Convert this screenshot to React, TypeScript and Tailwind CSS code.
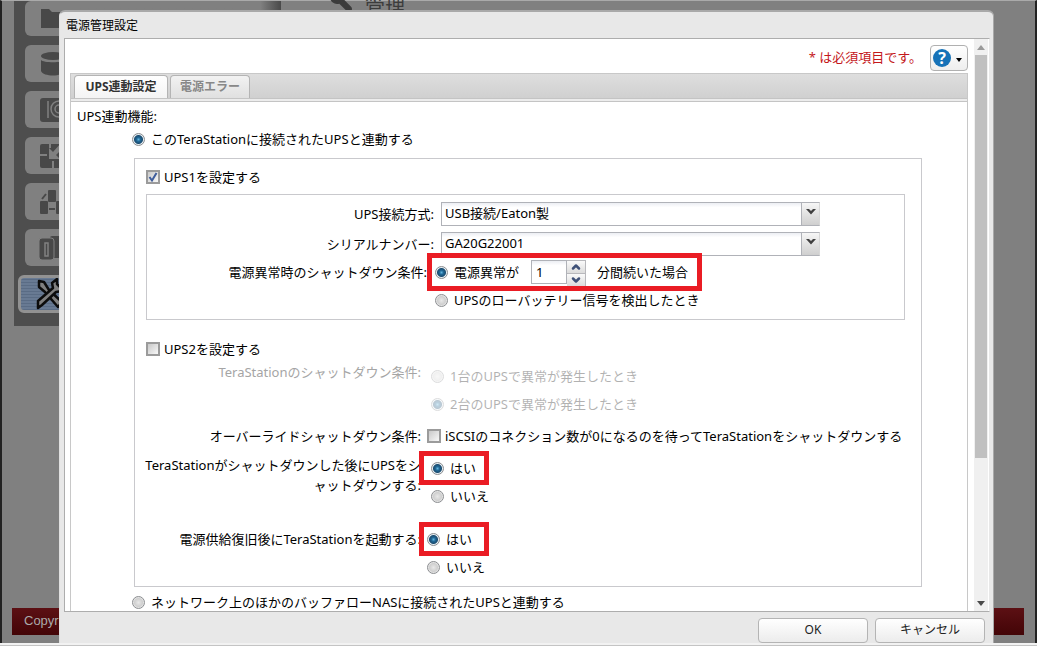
import { type ReactNode } from "react";
import { ChevronDown, ChevronUp, Wrench } from "lucide-react";

const radioClass =
  "m-0 size-[13px] shrink-0 appearance-none rounded-full border border-[#8b8d90] bg-[radial-gradient(circle,#e8e8e8_0,#cfcfcf_4px,#f4f4f4_6px)] checked:bg-[radial-gradient(circle,#62b4dc_0,#1f6796_2px,#1c4d70_4px,#e6eef3_5px,#d4dde3_6px)]";

type OptionProps = { name: string; label: string; checked?: boolean; disabled?: boolean };

function RadioOption({ name, label, checked = false, disabled = false }: OptionProps) {
  return (
    <label className={`flex h-5 w-max items-center gap-[6px] whitespace-nowrap ${disabled ? "opacity-30" : ""}`}>
      <input type="radio" name={name} defaultChecked={checked} disabled={disabled} className={radioClass} />
      {label}
    </label>
  );
}

function CheckOption({ label, checked = false }: { label: string; checked?: boolean }) {
  return (
    <label className="relative flex h-5 w-max items-center gap-1 whitespace-nowrap">
      <input
        type="checkbox"
        defaultChecked={checked}
        className="peer m-0 size-[14px] shrink-0 appearance-none border-2 border-[#9b9b9b] bg-linear-to-br from-[#c9c9c9] to-[#f8f8f8]"
      />
      <svg viewBox="0 0 14 14" className="pointer-events-none absolute left-0 hidden size-[14px] peer-checked:block">
        <path d="M3.5 7 L6 10.5 L10.5 3" fill="none" stroke="#3d5c9c" strokeWidth="2" />
      </svg>
      {label}
    </label>
  );
}

function Highlight({ children, className }: { children: ReactNode; className: string }) {
  return (
    <div className="relative w-max">
      {children}
      <div className={`pointer-events-none absolute border-5 border-[#ea1c24] ${className}`} />
    </div>
  );
}

function SelectField({ id, label, value }: { id: string; label: string; value: string }) {
  return (
    <>
      <label htmlFor={id} className="flex h-6 items-center justify-end pr-[7px]">
        {label}
      </label>
      <div className="relative h-6 w-full max-w-[379px]">
        <select
          id={id}
          className="block size-full appearance-none border border-[#b0b2b8] bg-white bg-linear-to-b from-[#eceef3] to-white to-20% pr-6 pb-[2px] pl-[3px]"
        >
          <option>{value}</option>
        </select>
        <span className="pointer-events-none absolute inset-y-0 right-0 flex w-[19px] items-center justify-center border border-[#b0b2b8] border-r-[#d8d8d8] bg-linear-to-b from-[#f6f6f6] to-[#cfcfcf] pb-1">
          <svg viewBox="0 0 10 6" className="h-[6px] w-[10px]">
            <path d="M0 0h3l2 2 2-2h3L5 5.5z" fill="#404040" />
          </svg>
        </span>
      </div>
    </>
  );
}

const sideIcons: ReactNode[] = [
  <path key="folder" d="M16 8h8l3 3h14v16H16z" />,
  <g key="disk">
    <path d="M16 15c2 3 22 3 24 0v11c-2 6-22 6-24 0z" />
    <ellipse cx="28" cy="11" rx="12" ry="4" />
  </g>,
  <g key="search">
    <rect x="15" y="7" width="24" height="24" rx="3" />
    <path d="M23 10v17" stroke="#808080" strokeWidth="1.5" />
    <circle cx="34" cy="18" r="8" stroke="#808080" strokeWidth="1.5" />
    <circle cx="34" cy="18" r="4" fill="none" stroke="#808080" strokeWidth="1.5" />
  </g>,
  <g key="arrows">
    <rect x="15" y="7" width="26" height="24" rx="2" />
    <path d="M15 18h7M28 24v8M25 4v7" stroke="#808080" strokeWidth="2" />
    <path d="M24 22V11l4 4 8-9 4 3-9 9 4 4z" fill="#808080" />
  </g>,
  <g key="network">
    <rect x="23" y="7" width="8" height="12" rx="1" />
    <rect x="15" y="18" width="8" height="13" rx="1" />
    <rect x="31" y="18" width="8" height="13" rx="1" />
    <path d="M17 16l4-5M24 26h6" stroke="#484848" strokeWidth="2" />
  </g>,
  <g key="drive">
    <rect x="25" y="7" width="14" height="22" rx="2" />
    <rect x="14" y="9" width="15" height="22" rx="3" stroke="#808080" />
    <path d="M20 14h3v13h-3z" fill="none" stroke="#808080" strokeWidth="1.5" />
  </g>,
];

function Backdrop() {
  return (
    <div className="flex min-h-screen flex-col border-x-2 border-t border-[#222] border-t-[#aaa] bg-[#808080] pb-[11px]" aria-hidden="true">
      <div className="flex flex-1 pl-3">
        <div className="h-[325px] w-[267px] bg-[#4e4e4e] pl-[11px]">
          <div className="flex flex-col gap-[9px]">
            {sideIcons.map((icon, index) => (
              <div
                key={index}
                className={`rounded-l-md bg-linear-to-r from-[#808080] from-92% to-[#4a4a4a] ${index === 0 ? "h-[35px]" : "h-[37px]"}`}
              >
                <svg viewBox="0 0 48 37" className="h-[37px] w-12" fill="#484848">
                  {icon}
                </svg>
              </div>
            ))}
          </div>
          <div className="mt-[9px] -ml-[7px] h-[38px] rounded-md border-3 border-[#929292] bg-[repeating-linear-gradient(0deg,#5a6c85_0_1px,#687a93_1px_3px)]">
            <svg viewBox="0 0 48 32" className="h-8 w-12">
              <g stroke="#0c0c0c" strokeWidth="2.5" fill="#808080" strokeLinejoin="round">
                <path d="M18 3l5 1 5 8 13 12-4 5L24 14l-6-5z" />
                <path d="M17 23l15-13-1-5 5-4 0 5 3 3 5-2-3 6-6 1-14 13-4 3z" />
              </g>
            </svg>
          </div>
        </div>
        <div className="flex items-start gap-3 pl-12 text-xl leading-5 text-[#3c3c3c]">
          <Wrench className="-mt-3 size-6 -scale-x-100" fill="#3c3c3c" />
          <span className="-mt-1">管理</span>
        </div>
      </div>
      <div className="mr-[11px] ml-[10px] h-[27px] bg-linear-to-b from-[#5c1014] to-[#430507] pl-3 font-['Liberation_Sans',sans-serif] text-[13px] leading-[25px] text-[#aaa]">
        Copyright
      </div>
    </div>
  );
}

const spinButton =
  "flex flex-1 items-center justify-center border border-l-0 border-[#b8b8bc] bg-linear-to-b from-[#fafafa] to-[#dcdcdc]";

function UpsOneGroup() {
  return (
    <div className="mt-[7px] grid h-[126px] grid-cols-[294px_1fr] content-start border border-[#c9c9cd] pt-[7px]">
      <SelectField id="method" label="UPS接続方式:" value="USB接続/Eaton製" />
      <div className="col-span-2 h-[6px]" />
      <SelectField id="serial" label="シリアルナンバー:" value="GA20G22001" />
      <div className="flex h-8 items-center justify-end pr-[14px] whitespace-nowrap">電源異常時のシャットダウン条件:</div>
      <div className="-ml-[6px] flex h-8 items-center">
        <Highlight className="-top-[7px] -right-[14px] -bottom-[7px] -left-2 bg-transparent">
          <div className="flex h-6 items-center">
            <RadioOption name="condition" label="電源異常が" checked />
            <div className="ml-3 flex h-6 w-[55px]">
              <input
                type="text"
                aria-label="分"
                defaultValue="1"
                className="min-w-0 flex-1 border border-[#b0b2b8] bg-linear-to-b from-[#eceef3] to-white to-20% pl-1"
              />
              <div className="flex w-[19px] flex-col">
                <button type="button" aria-label="増やす" className={spinButton}>
                  <ChevronUp className="size-3 text-[#3f5178]" strokeWidth={5} />
                </button>
                <button type="button" aria-label="減らす" className={`${spinButton} border-t-0`}>
                  <ChevronDown className="size-3 text-[#3f5178]" strokeWidth={5} />
                </button>
              </div>
            </div>
            <span className="ml-[11px]">分間続いた場合</span>
          </div>
        </Highlight>
      </div>
      <div className="col-start-2 -ml-[6px] flex h-6 items-center">
        <RadioOption name="condition" label="UPSのローバッテリー信号を検出したとき" />
      </div>
    </div>
  );
}

function LowerSettings() {
  return (
    <div className="grid grid-cols-[275px_1fr]">
      <div className="flex h-7 items-start justify-end pt-[3px] text-[#a5a5a5]">TeraStationのシャットダウン条件:</div>
      <div className="flex h-[61px] flex-col gap-2 pt-[7px] pl-[10px]">
        <RadioOption name="ups2" label="1台のUPSで異常が発生したとき" disabled />
        <RadioOption name="ups2" label="2台のUPSで異常が発生したとき" checked disabled />
      </div>
      <div className="flex h-8 items-center justify-end">オーバーライドシャットダウン条件:</div>
      <div className="flex h-8 items-center pl-[6px]">
        <CheckOption label="iSCSIのコネクション数が0になるのを待ってTeraStationをシャットダウンする" />
      </div>
      <div className="-ml-1 h-[77px] pt-[3px] text-right leading-5 break-all [line-break:anywhere]">
        TeraStationがシャットダウンした後にUPSをシャットダウンする:
      </div>
      <div className="flex h-[77px] flex-col gap-2 pt-[6px] pl-[10px]">
        <Highlight className="-top-[7px] -right-[13px] -bottom-[7px] -left-3">
          <RadioOption name="shutdown" label="はい" checked />
        </Highlight>
        <RadioOption name="shutdown" label="いいえ" />
      </div>
      <div className="flex h-5 items-center justify-end">電源供給復旧後にTeraStationを起動する:</div>
      <div className="flex flex-col gap-2 pl-[6px]">
        <Highlight className="-top-[7px] -right-[17px] -bottom-[7px] -left-2">
          <RadioOption name="restart" label="はい" checked />
        </Highlight>
        <RadioOption name="restart" label="いいえ" />
      </div>
    </div>
  );
}

export default function App() {
  const footerButton =
    "h-[25px] w-[110px] rounded-sm border border-[#b4b4b4] bg-linear-to-b from-white to-[#ececec] text-xs text-[#222]";
  return (
    <div className="relative min-h-screen overflow-hidden font-['Noto_Sans','Noto_Sans_CJK_JP',sans-serif] text-[13px] leading-5 text-black">
      <Backdrop />
      <div className="absolute inset-x-0 bottom-0 h-[3px] border-b border-[#c4c4c4] bg-[#f2f2f2]" />
      <div className="absolute inset-0 flex pt-[10px] pr-[43px] pb-[3px] pl-[59px]">
        <main role="dialog" aria-labelledby="dialog-title" className="flex min-w-0 flex-1 flex-col rounded-t-md border-x border-t-2 border-[#a9a9a9] border-l-[#e0e0e0] bg-[#e8e8e8] pr-[3px] pl-1">
          <h1 id="dialog-title" className="h-[26px] pt-1 pl-[2px] text-xs leading-5">電源管理設定</h1>
          <div className="flex min-h-0 flex-1 overflow-hidden border border-[#adadad] border-r-[#e8e8e8] bg-white">
            <div className="flex min-w-0 flex-1 flex-col pr-[6px] pl-[5px]">
              <div className="flex h-[34px] shrink-0 items-start justify-end gap-2 pt-[6px]">
                <p className="pt-[2px] text-[#c4181c]">* は必須項目です。</p>
                <button type="button" aria-label="ヘルプ" className="flex h-[26px] w-[38px] items-center gap-[5px] rounded-sm border border-[#b0b0b0] bg-linear-to-b from-white to-[#eee] pl-[2px]">
                  <span className="flex size-[18px] items-center justify-center rounded-full bg-[#1672b8] text-base leading-4 font-bold text-white">?</span>
                  <svg viewBox="0 0 6 4" className="mt-1 h-1 w-[6px]"><path d="M0 0h6L3 4z" /></svg>
                </button>
              </div>
              <div className="min-h-0 flex-1 overflow-hidden border border-b-0 border-[#c8c8c8]">
                <div className="border-b border-[#c4c4c4] bg-[#ececec] pb-[2px]">
                  <div role="tablist" className="flex h-[25px] items-end gap-[2px] border-b border-[#c4c4c4] bg-linear-to-b from-[#dedede] to-[#d0d0d0] pl-[3px]">
                    <button type="button" role="tab" aria-selected="true" className="h-[23px] w-[94px] rounded-t border border-b-0 border-[#b4b4b4] bg-linear-to-b from-white to-[#f4f4f4] text-xs font-bold whitespace-nowrap text-[#333]">UPS連動設定</button>
                    <button type="button" role="tab" aria-selected="false" className="h-[23px] w-[80px] rounded-t border border-b-0 border-[#b4b4b4] bg-linear-to-b from-[#f2f2f2] to-[#e0e0e0] text-xs font-bold whitespace-nowrap text-[#888]">電源エラー</button>
                  </div>
                </div>
                <div className="pt-1 pl-[6px]">UPS連動機能:</div>
                <div className="pt-[3px] pl-[61px]">
                  <RadioOption name="link" label="このTeraStationに接続されたUPSと連動する" checked />
                </div>
                <section className="mt-[9px] mr-[45px] ml-[63px] h-[429px] border border-[#c9c9cd] pt-2 pr-4 pl-[11px]">
                  <CheckOption label="UPS1を設定する" checked />
                  <UpsOneGroup />
                  <div className="mt-[19px]">
                    <CheckOption label="UPS2を設定する" />
                  </div>
                  <LowerSettings />
                </section>
                <div className="pt-[5px] pl-[61px]">
                  <RadioOption name="link" label="ネットワーク上のほかのバッファローNASに接続されたUPSと連動する" />
                </div>
              </div>
            </div>
            <div className="mr-px flex w-[14px] flex-col items-center bg-[#f0f0f0]">
              <svg viewBox="0 0 8 5" className="mt-[6px] mb-[5px] h-[5px] w-2"><path d="M0 5h8L4 0z" fill="#9a9a9a" /></svg>
              <div className="w-3 flex-[401] bg-[#c0c0c0]" />
              <div className="flex-[142]" />
              <svg viewBox="0 0 8 5" className="mb-[5px] h-[5px] w-2"><path d="M0 0h8L4 5z" fill="#4a4a4a" /></svg>
            </div>
          </div>
          <footer className="flex h-[31px] shrink-0 items-center justify-end gap-[7px] pt-[5px] pr-[5px]">
            <button type="button" className={footerButton}>OK</button>
            <button type="button" className={footerButton}>キャンセル</button>
          </footer>
        </main>
      </div>
    </div>
  );
}
